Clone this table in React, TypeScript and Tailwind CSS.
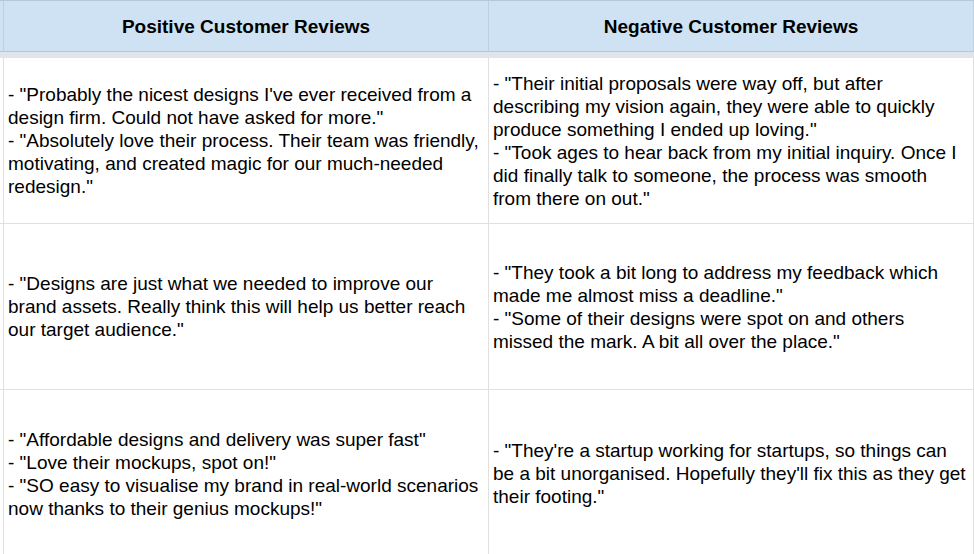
const rows = [
  {
    positive: [
      "- \"Probably the nicest designs I've ever received from a design firm. Could not have asked for more.\"",
      "- \"Absolutely love their process. Their team was friendly, motivating, and created magic for our much-needed redesign.\"",
    ],
    negative: [
      "- \"Their initial proposals were way off, but after describing my vision again, they were able to quickly produce something I ended up loving.\"",
      "- \"Took ages to hear back from my initial inquiry. Once I did finally talk to someone, the process was smooth from there on out.\"",
    ],
    height: "h-[166px]",
  },
  {
    positive: [
      "- \"Designs are just what we needed to improve our brand assets. Really think this will help us better reach our target audience.\"",
    ],
    negative: [
      "- \"They took a bit long to address my feedback which made me almost miss a deadline.\"",
      "- \"Some of their designs were spot on and others missed the mark. A bit all over the place.\"",
    ],
    height: "h-[166px]",
  },
  {
    positive: [
      "- \"Affordable designs and delivery was super fast\"",
      "- \"Love their mockups, spot on!\"",
      "- \"SO easy to visualise my brand in real-world scenarios now thanks to their genius mockups!\"",
    ],
    negative: [
      "- \"They're a startup working for startups, so things can be a bit unorganised. Hopefully they'll fix this as they get their footing.\"",
    ],
    height: "h-[168px]",
  },
];

function Cell({ lines, last }: { lines: string[]; last?: boolean }) {
  return (
    <div
      className={`flex items-center border-l border-[#e0e0e0] pl-[4px] ${
        last ? "w-[486px] border-r pr-[4px]" : "w-[485px] pr-[8px]"
      }`}
    >
      <div>
        {lines.map((line, i) => (
          <p key={i}>{line}</p>
        ))}
      </div>
    </div>
  );
}

export default function App() {
  return (
    <div className="w-[974px] h-[554px] overflow-hidden bg-white text-black font-['Liberation_Sans',Arial,sans-serif] text-[19px] leading-[23px]">
      {/* Header */}
      <div className="flex h-[52px] bg-[#cfe2f3] border-t border-b border-[#b4c8dc]">
        <div className="w-[3px]" />
        <div className="w-[485px] flex items-center justify-center border-l border-[#bcd0e3] font-bold">
          Positive Customer Reviews
        </div>
        <div className="w-[486px] flex items-center justify-center border-l border-r border-[#bcd0e3] font-bold">
          Negative Customer Reviews
        </div>
      </div>
      <div className="h-[6px] bg-[#e1e4e8]" />

      {/* Rows */}
      {rows.map((row, i) => (
        <div key={i} className={`flex ${row.height} border-b border-[#e0e0e0]`}>
          <div className="w-[3px]" />
          <Cell lines={row.positive} />
          <Cell lines={row.negative} last />
        </div>
      ))}
    </div>
  );
}
